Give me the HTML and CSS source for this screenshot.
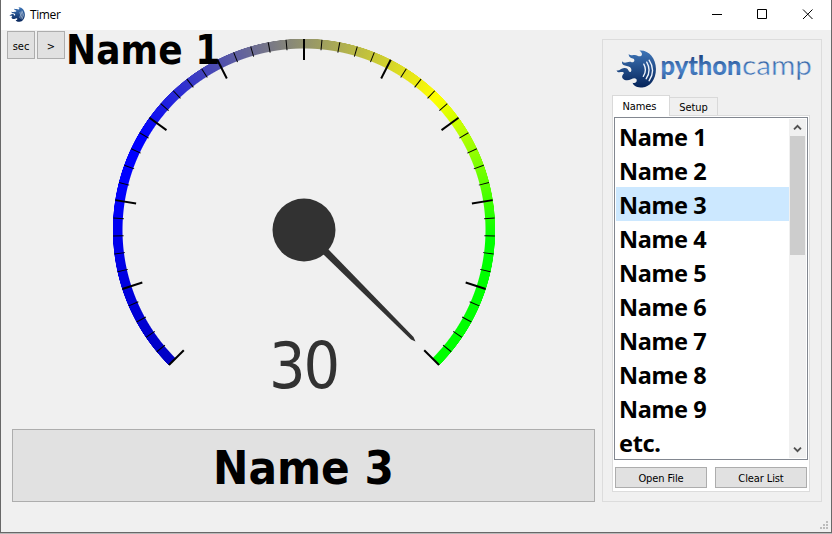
FILE: index.html
```html
<!DOCTYPE html>
<html lang="en">
<head>
<meta charset="utf-8">
<title>Timer</title>
<link rel="stylesheet" href="styles.css">
</head>
<body>
<svg class="defs" width="0" height="0" aria-hidden="true">
  <defs>
    <linearGradient id="navy" x1="0" y1="0" x2="0" y2="1">
      <stop offset="0" stop-color="#3f76b8"/><stop offset="1" stop-color="#052359"/>
    </linearGradient>
    <linearGradient id="word" gradientUnits="userSpaceOnUse" x1="0" y1="8" x2="0" y2="34">
      <stop offset="0" stop-color="#234a88"/><stop offset=".45" stop-color="#4f89cf"/><stop offset="1" stop-color="#274d8b"/>
    </linearGradient>
    <symbol id="flame" viewBox="0 0 41 39">
      <path fill="url(#navy)" d="M24 .5C33 -.5 41 8 41 19.500C41 30 35 38 27 38.500C22 38.500 18 37 17 33.500C20 34.500 22 32.500 21 30C18 27 15 32 10 31C6 30 5 27 8 24C8 20.500 2 25 .500 21C4 22 5 18 9 18.500C14 19 12 23 15 22.500C17 20 15 17 11 16.500C8 16 5 15 6.500 11.500C9 15 12 11 16 12.500C18 13 20 11 18 9C16 8 13 8 13 4C16 7 19 4 22 6C26 8 29 4 24 .5Z"/>
      <path fill="none" stroke="#eef3fa" stroke-width="1.400" stroke-linecap="round" d="M28.500 14.500Q32 21 28 27M31.500 12.500Q36.500 21 31 29.500M34 10.500Q41 21 34 31.500"/>
    </symbol>
  </defs>
</svg>
<div class="window">
  <header class="titlebar">
    <svg class="app-icon" viewBox="0 0 41 39"><use href="#flame"/></svg>
    <span class="title">Timer</span>
    <svg class="controls" width="103" height="12" viewBox="0 0 103 12" fill="none" stroke="#000">
      <path d="M0 6.5H10M45.500 1.500H54.500V10.500H45.500ZM91 1.500L100.500 11M100.500 1.500L91 11"/>
    </svg>
  </header>
  <main class="content">
    <section class="timer">
      <div class="toolbar">
        <button class="btn tool">sec</button>
        <button class="btn tool">&gt;</button>
        <span class="current">Name 1</span>
      </div>
      <div class="gauge">
        <div class="ring"></div>
        <svg class="dial" viewBox="-192 -192 384 384">
          <g id="ticks" stroke="#000"></g>
          <circle r="31.500" fill="#323232"/>
          <path fill="#323232" d="M19 24L24 19L109.500 107L111.500 111.500L107 109.500Z"/>
        </svg>
        <span class="value">30</span>
      </div>
      <button class="btn next">Name 3</button>
    </section>
    <aside class="side">
      <svg class="logo" width="198" height="42" viewBox="0 0 198 42">
        <use href="#flame" x="1" y="1" width="40" height="38"/>
        <text class="word" y="26"><tspan class="python" x="45.500" textLength="81" lengthAdjust="spacingAndGlyphs">python</tspan><tspan class="camp" x="127" textLength="70" lengthAdjust="spacingAndGlyphs">camp</tspan></text>
      </svg>
      <nav class="tabs">
        <span class="tab active">Names</span>
        <span class="tab">Setup</span>
      </nav>
      <div class="page">
        <div class="list">
          <ul class="items">
            <li>Name 1</li><li>Name 2</li><li class="selected">Name 3</li><li>Name 4</li><li>Name 5</li>
            <li>Name 6</li><li>Name 7</li><li>Name 8</li><li>Name 9</li><li>etc.</li>
          </ul>
          <div class="scrollbar">
            <svg class="arrow" viewBox="0 0 16 17"><path d="M4.300 10.500L8 6.800L11.700 10.500"/></svg>
            <div class="thumb"></div>
            <svg class="arrow" viewBox="0 0 16 17"><path d="M4.300 6.500L8 10.200L11.700 6.500"/></svg>
          </div>
        </div>
        <div class="actions">
          <button class="btn small">Open File</button>
          <button class="btn small">Clear List</button>
        </div>
      </div>
    </aside>
  </main>
  <svg class="grip" width="9" height="9" viewBox="0 0 9 9" fill="#bcbcbc"><path d="M6 0h2v2h-2zM3 3h2v2h-2zM6 3h2v2h-2zM0 6h2v2h-2zM3 6h2v2h-2zM6 6h2v2h-2z"/></svg>
</div>
<script src="gauge.js"></script>
</body>
</html>
```
FILE: styles.css
```css
* { box-sizing: border-box; }
body {
  margin: 0;
  height: 534px;
  overflow: hidden;
  background: #b9b9b9;
  font-family: "DejaVu Sans Condensed", "DejaVu Sans", sans-serif;
  color: #000;
}
.defs { position: absolute; }
.window {
  position: relative;
  display: flex;
  flex-direction: column;
  width: 832px;
  height: 533px;
  border: solid #686868;
  border-width: 0 1px 1px;
  background: #f0f0f0;
}
.titlebar {
  display: flex;
  align-items: center;
  height: 30px;
  padding: 0 16px 0 8px;
  background: #fff;
}
.app-icon { width: 16px; height: 15px; margin-top: -2px; }
.title { margin: -1px 0 0 5px; font: 12px "Open Sans", sans-serif; letter-spacing: -.4px; }
.controls { margin: -2px 0 0 auto; }
.content { display: flex; flex: 1; padding: 0 9px 30px 11px; }
.btn {
  padding: 0;
  border: 1px solid #adadad;
  background: #e1e1e1;
  color: #000;
  font-family: inherit;
}
.timer {
  position: relative;
  display: flex;
  flex-direction: column;
  width: 583px;
  margin-right: 7px;
}
.toolbar {
  position: absolute;
  z-index: 1;
  top: 1px;
  left: -5px;
  display: flex;
  gap: 2px;
}
.tool { width: 28px; height: 28px; padding-top: 2px; font-size: 11px; }
.current {
  margin: -5px 0 0 -1px;
  font-size: 40px;
  line-height: 48px;
  font-weight: bold;
  letter-spacing: .1px;
  white-space: nowrap;
}
.gauge {
  display: grid;
  justify-content: center;
  grid-template: 384px / 384px;
  height: 399px;
  padding-top: 8px;
}
.ring, .dial, .value { grid-area: 1 / 1; }
.ring {
  border-radius: 50%;
  background: conic-gradient(#92926d 0deg, #ff0 45deg, #0f0 93deg, #0f0 135deg, transparent 135deg 225deg, #0000c3 225deg, #00f 285deg, #00f 300deg, #92926d 360deg);
  mask: radial-gradient(circle, transparent 181px, #000 182px 191px, transparent 191.500px);
}
.dial { position: relative; width: 384px; height: 384px; }
.value {
  align-self: end;
  justify-self: center;
  margin-bottom: 18px;
  font-size: 64px;
  line-height: 76px;
  letter-spacing: -2px;
  color: #323232;
}
.next { height: 73px; padding-top: 3px; font-size: 47px; font-weight: bold; letter-spacing: 0; }
.side {
  display: flex;
  flex-direction: column;
  width: 220px;
  height: 463px;
  margin-top: 9px;
  padding: 9px 11px 9px 9px;
  border: 1px solid #dcdcdc;
}
.logo { flex: none; margin-left: 3px; }
.word { font-size: 26px; fill: url(#word); }
.python { font-family: Lato, sans-serif; font-weight: 900; }
.camp { font-family: Lato, sans-serif; font-weight: 400; stroke: #f0f0f0; stroke-width: .4px; }
.tabs { display: flex; align-items: flex-end; height: 20px; margin-top: 4px; font-size: 11px; letter-spacing: -.1px; }
.tab { width: 48px; height: 18px; border: solid #d9d9d9; border-width: 1px 1px 0 0; text-align: center; line-height: 19px; }
.tab.active { z-index: 1; width: 58px; height: 21px; margin-bottom: -1px; padding-right: 3px; border-left-width: 1px; background: #fff; line-height: 22px; }
.page {
  flex: 1;
  width: 198px;
  padding: 1px;
  border: 1px solid #dcdcdc;
  background: #fff;
}
.list { display: flex; height: 343px; padding: 1px; border: 1px solid #828790; }
.items {
  flex: 1;
  margin: 0;
  padding: 0;
  list-style: none;
  font: bold 23.500px/36px "Noto Sans", sans-serif;
  letter-spacing: -.4px;
}
.items li { height: 34px; padding-left: 3px; }
.selected { background: #cce8ff; }
.scrollbar { display: flex; flex-direction: column; width: 17px; padding: 0 1px; background: #f0f0f0; }
.arrow { height: 17px; fill: none; stroke: #505050; stroke-width: 2; }
.thumb { height: 119px; margin-bottom: auto; background: #cdcdcd; }
.actions { display: flex; justify-content: space-between; padding: 7px 1px 0; }
.small { width: 92px; height: 21px; padding-top: 1px; font-size: 11px; letter-spacing: -.1px; }
.grip { position: absolute; right: 2px; bottom: 2px; }
```
FILE: gauge.js
```js
// Scale: 50 divisions over 270 degrees, every fifth one long.
const ticks = document.getElementById("ticks");
for (let i = 0; i <= 50; i++) {
  const major = i % 5 === 0;
  const line = document.createElementNS("http://www.w3.org/2000/svg", "line");
  line.setAttribute("x1", major ? 170 : 180.5);
  line.setAttribute("x2", 191);
  line.setAttribute("stroke-width", major ? 2 : 1);
  line.setAttribute("transform", `rotate(${135 + i * 5.4})`);
  ticks.append(line);
}
```
